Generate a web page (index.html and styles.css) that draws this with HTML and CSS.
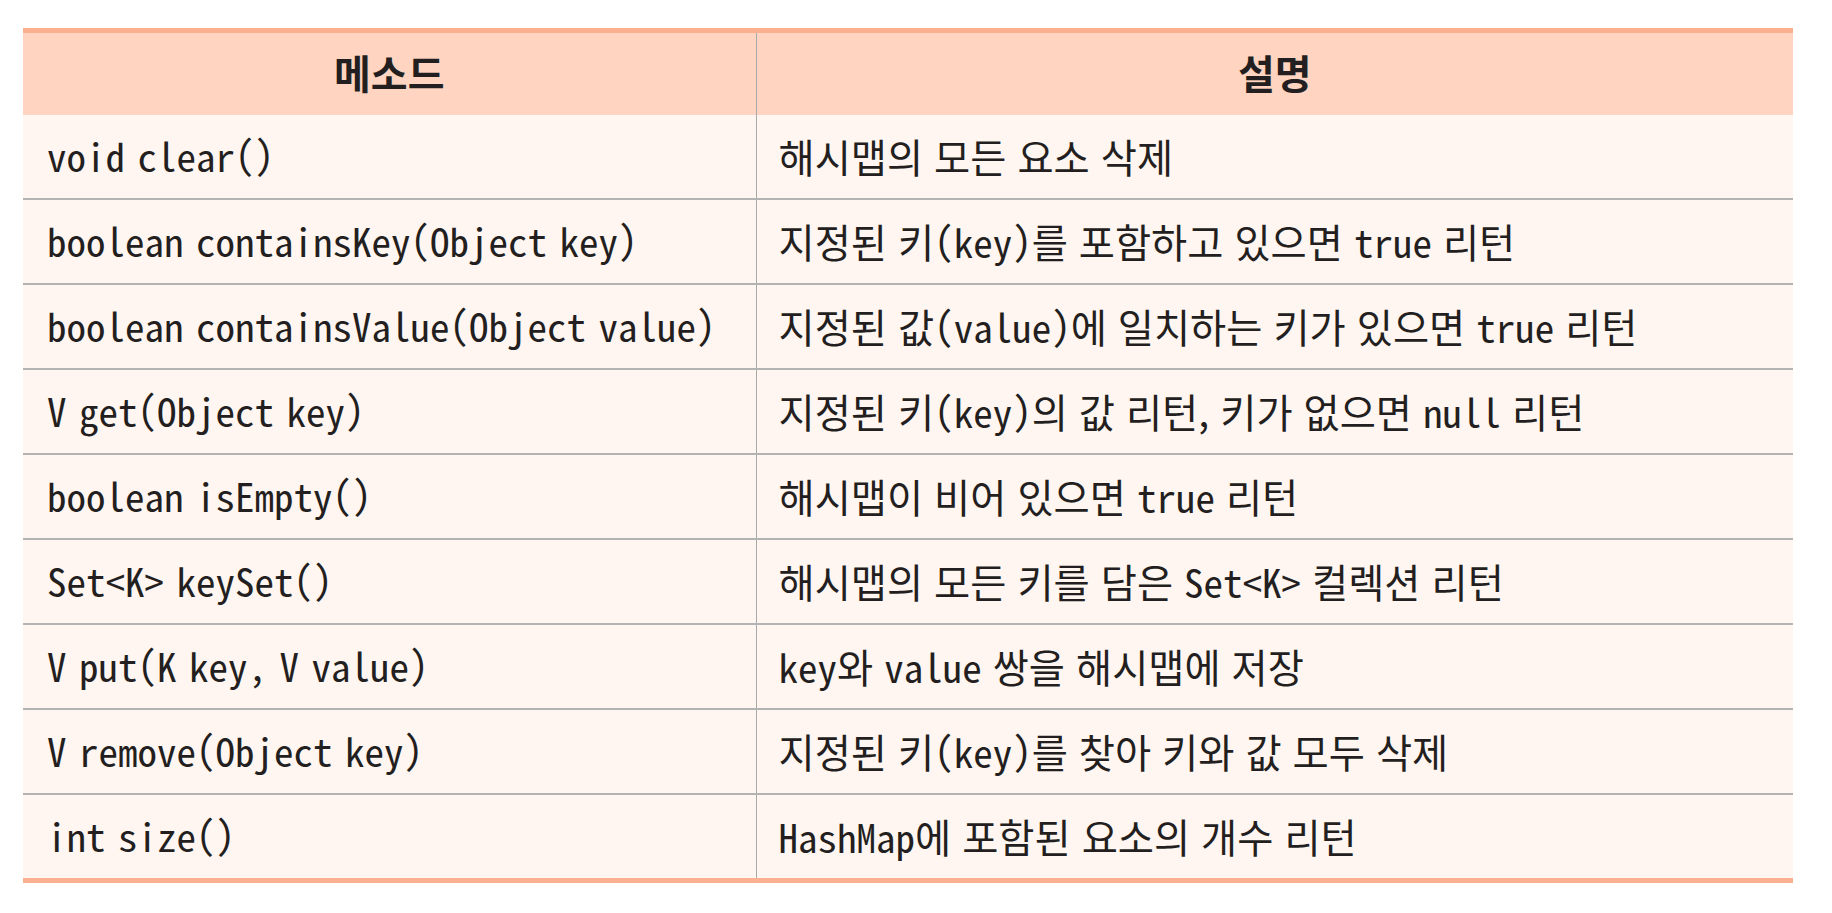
FILE: index.html
```html
<!DOCTYPE html>
<html lang="ko">
<head>
<meta charset="utf-8">
<title>HashMap 메소드</title>
<link rel="stylesheet" href="styles.css">
</head>
<body>
<div class="page">
  <table class="methods">
    <colgroup><col class="col-method"><col class="col-desc"></colgroup>
    <thead>
      <tr><th>메소드</th><th>설명</th></tr>
    </thead>
    <tbody>
      <tr><td class="m">void clear()</td><td class="d">해시맵의 모든 요소 삭제</td></tr>
      <tr><td class="m">boolean containsKey(Object key)</td><td class="d">지정된 키<span class="c">(key)</span>를 포함하고 있으면 <span class="c">true</span> 리턴</td></tr>
      <tr><td class="m">boolean containsValue(Object value)</td><td class="d">지정된 값<span class="c">(value)</span>에 일치하는 키가 있으면 <span class="c">true</span> 리턴</td></tr>
      <tr><td class="m">V get(Object key)</td><td class="d">지정된 키<span class="c">(key)</span>의 값 리턴, 키가 없으면 <span class="c">null</span> 리턴</td></tr>
      <tr><td class="m">boolean isEmpty()</td><td class="d">해시맵이 비어 있으면 <span class="c">true</span> 리턴</td></tr>
      <tr><td class="m">Set&lt;K&gt; keySet()</td><td class="d">해시맵의 모든 키를 담은 <span class="c">Set&lt;K&gt;</span> 컬렉션 리턴</td></tr>
      <tr><td class="m">V put(K key, V value)</td><td class="d"><span class="c">key</span>와 <span class="c">value</span> 쌍을 해시맵에 저장</td></tr>
      <tr><td class="m">V remove(Object key)</td><td class="d">지정된 키<span class="c">(key)</span>를 찾아 키와 값 모두 삭제</td></tr>
      <tr><td class="m">int size()</td><td class="d"><span class="c">HashMap</span>에 포함된 요소의 개수 리턴</td></tr>
    </tbody>
  </table>
</div>
</body>
</html>
```
FILE: styles.css
```css
html, body {
  margin: 0;
  padding: 0;
  background: #ffffff;
}

.page {
  padding: 28px 0 0 23px;
}

.methods {
  width: 1770px;
  border-collapse: collapse;
  table-layout: fixed;
  border-top: 5px solid #fab091;
  border-bottom: 5px solid #fab091;
  color: #231f20;
}

.col-method { width: 733px; }
.col-desc { width: 1037px; }

.methods th {
  height: 78px;
  padding: 0 0 4px 0;
  background: #ffd4c0;
  font-family: "Noto Sans CJK KR", "Noto Sans", sans-serif;
  font-size: 40px;
  font-weight: 700;
  text-align: center;
  vertical-align: middle;
}

.methods th + th,
.methods td + td {
  border-left: 1px solid #a9a9a9;
}

.methods td {
  height: 80px;
  padding: 0 0 3px 22px;
  background: #fff5f1;
  border-bottom: 2px solid #b3b3b3;
  vertical-align: middle;
  white-space: nowrap;
}

.methods tbody tr:last-child td {
  border-bottom: none;
}

.methods td.m {
  padding-left: 24px;
  font-family: "Noto Sans Mono CJK KR", "DejaVu Sans Mono", monospace;
  font-size: 39px;
  word-spacing: -7px;
}

.methods td.d {
  font-family: "Noto Sans CJK KR", "Noto Sans", sans-serif;
  font-size: 39.3px;
}

.c {
  font-family: "Noto Sans Mono CJK KR", "DejaVu Sans Mono", monospace;
  font-size: 39px;
}
```
